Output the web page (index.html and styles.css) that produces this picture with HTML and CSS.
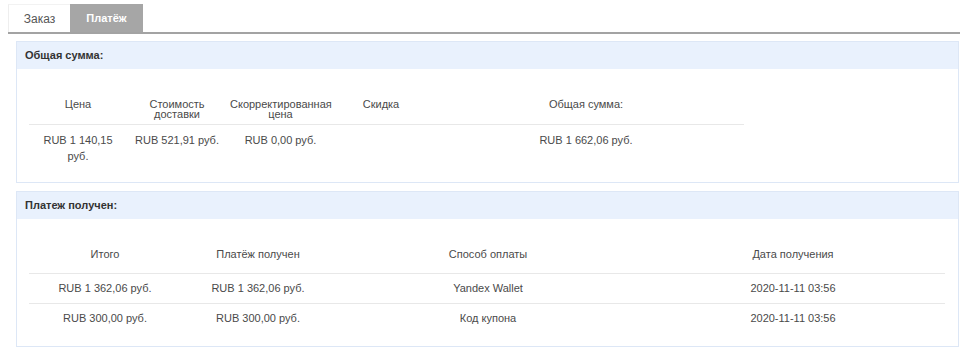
FILE: index.html
```html
<!DOCTYPE html>
<html lang="ru">
<head>
<meta charset="utf-8">
<link rel="stylesheet" href="styles.css">
</head>
<body>
<div class="page">
  <div class="tabs">
    <div class="tab">Заказ</div>
    <div class="tab tab-active">Платёж</div>
  </div>

  <div class="panel">
    <div class="panel-head">Общая сумма:</div>
    <div class="panel-body">
      <table class="grid grid-sum">
        <colgroup>
          <col class="c98"><col class="c100"><col class="c107"><col class="c94"><col class="c316">
        </colgroup>
        <thead>
          <tr>
            <th>Цена</th>
            <th>Стоимость доставки</th>
            <th>Скорректированная цена</th>
            <th>Скидка</th>
            <th>Общая сумма:</th>
          </tr>
        </thead>
        <tbody>
          <tr>
            <td>RUB 1 140,15 руб.</td>
            <td>RUB 521,91 руб.</td>
            <td>RUB 0,00 руб.</td>
            <td></td>
            <td>RUB 1 662,06 руб.</td>
          </tr>
        </tbody>
      </table>
    </div>
  </div>

  <div class="panel">
    <div class="panel-head">Платеж получен:</div>
    <div class="panel-body panel-body-2">
      <table class="grid grid-pay">
        <colgroup>
          <col class="c152"><col class="c154"><col class="c306"><col class="c304">
        </colgroup>
        <thead>
          <tr>
            <th>Итого</th>
            <th>Платёж получен</th>
            <th>Способ оплаты</th>
            <th>Дата получения</th>
          </tr>
        </thead>
        <tbody>
          <tr>
            <td>RUB 1 362,06 руб.</td>
            <td>RUB 1 362,06 руб.</td>
            <td>Yandex Wallet</td>
            <td>2020-11-11 03:56</td>
          </tr>
          <tr>
            <td>RUB 300,00 руб.</td>
            <td>RUB 300,00 руб.</td>
            <td>Код купона</td>
            <td>2020-11-11 03:56</td>
          </tr>
        </tbody>
      </table>
    </div>
  </div>
</div>
</body>
</html>
```

FILE: styles.css
```css
html, body {
  margin: 0;
  padding: 0;
  background: #ffffff;
}

body {
  font-family: "Liberation Sans", Arial, sans-serif;
  font-size: 11px;
  color: #4a4a4a;
}

.page {
  padding: 4px 0 0 8px;
}

.tabs {
  display: flex;
  height: 28px;
  border-bottom: 2px solid #a3a3a3;
}

.tab {
  width: 62px;
  display: flex;
  align-items: center;
  justify-content: center;
  font-size: 12px;
  color: #555555;
  background: #ffffff;
  box-sizing: border-box;
  border-left: 1px solid #eeeeee;
  border-top: 1px solid #f2f2f2;
}

.tab-active {
  width: 73px;
  background: #a6a6a6;
  color: #ffffff;
  border: none;
  font-weight: bold;
  font-size: 11px;
}

.panel {
  margin: 7px 1px 0 8px;
  border: 1px solid #dde7f6;
  background: #ffffff;
}

.panel + .panel {
  margin-top: 8px;
}

.panel-head {
  height: 27px;
  line-height: 27px;
  padding-left: 8px;
  background: #e9f1fd;
  font-weight: bold;
  font-size: 11px;
  color: #333333;
}

.panel-body {
  padding: 20px 12px 11px 12px;
}

.panel-body-2 {
  padding-bottom: 13px;
}

.grid {
  border-collapse: collapse;
  table-layout: fixed;
}

.grid-sum {
  width: 715px;
}

.grid-pay {
  width: 916px;
}

.grid th,
.grid td {
  font-weight: normal;
  text-align: center;
  color: #4a4a4a;
}

.grid-sum th {
  vertical-align: top;
  line-height: 10px;
  padding: 10px 3px 5px;
  border-bottom: 1px solid #e8e8e8;
}

.grid-sum td {
  vertical-align: top;
  line-height: 16px;
  padding: 7px 3px 7px;
}

.grid-pay th {
  line-height: 15px;
  padding: 8px 4px 11px;
  border-bottom: 1px solid #e8e8e8;
}

.grid-pay td {
  line-height: 15px;
  padding: 7px 4px;
}

.grid-pay tbody tr + tr td {
  border-top: 1px solid #e8e8e8;
}

.c98 { width: 98px; }
.c100 { width: 100px; }
.c107 { width: 107px; }
.c94 { width: 94px; }
.c316 { width: 316px; }
.c152 { width: 152px; }
.c154 { width: 154px; }
.c306 { width: 306px; }
.c304 { width: 304px; }
```
